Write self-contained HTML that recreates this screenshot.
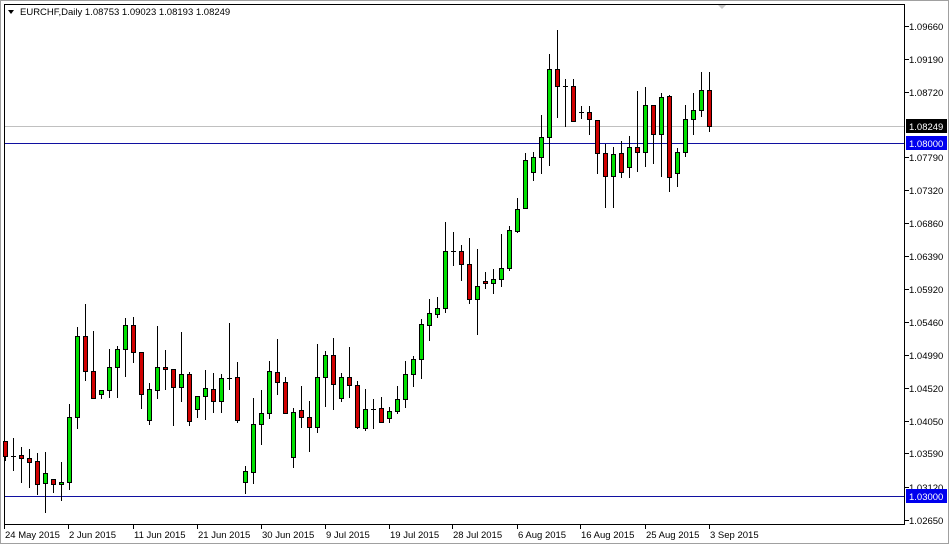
<!DOCTYPE html>
<html><head><meta charset="utf-8"><style>
html,body{margin:0;padding:0;background:#fff;}
body{width:949px;height:544px;overflow:hidden;}
svg{display:block;font-family:"Liberation Sans",sans-serif;}
</style></head><body>
<svg id="s" width="949" height="544" xmlns="http://www.w3.org/2000/svg">
<rect x="0" y="0" width="949" height="544" fill="#fff"/>
<rect x="0.5" y="0.5" width="948" height="543" fill="none" stroke="#a0a0a0"/>
<rect x="4.5" y="4.5" width="900" height="520" fill="#fff" stroke="#000"/>
<line x1="5" y1="126.5" x2="904" y2="126.5" stroke="#c0c0c0"/>
<line x1="5" y1="143.5" x2="904" y2="143.5" stroke="#1010a0"/>
<line x1="5" y1="496.5" x2="904" y2="496.5" stroke="#1010a0"/>
<polygon points="8,10 14,10 11,14" fill="#000"/>
<text x="20" y="15" font-size="9.5" fill="#000">EURCHF,Daily  1.08753 1.09023 1.08193 1.08249</text>
<polygon points="718,5 726,5 722,9" fill="#c8c8c8"/>
<g id="c"></g>
<g id="ax" font-size="9.5" fill="#000"></g>
</svg>
<script>
var d=[[5,441,456,441,460],[13,456,456,438,470],[21,455,458,447,482],[29,458,462,449,487],[37,461,484,453,494],[45,483,473,452,512],[53,479,484,479,492],[61,484,482,462,500],[69,482,417,404,489],[77,417,336,327,428],[85,336,371,304,380],[93,371,398,331,398],[101,394,390,390,398],[109,390,367,349,397],[117,367,349,346,397],[125,349,325,318,376],[133,325,352,317,362],[141,352,394,352,408],[149,420,389,383,424],[157,390,367,326,398],[165,367,369,350,389],[173,369,387,369,425],[181,387,374,332,401],[189,374,421,372,425],[197,409,396,396,417],[205,396,388,370,419],[213,389,401,373,412],[221,401,378,374,412],[229,378,378,323,389],[237,377,420,362,422],[245,482,471,466,493],[253,472,424,398,483],[261,424,413,390,444],[269,413,371,361,418],[277,372,382,339,394],[285,382,413,377,413],[293,457,412,408,467],[301,410,417,386,427],[309,417,427,401,451],[317,427,377,344,432],[325,377,355,351,406],[333,355,384,338,409],[341,398,377,373,401],[349,377,385,347,397],[357,385,427,381,428],[365,428,409,389,430],[373,409,409,399,428],[381,408,422,397,422],[389,418,411,407,422],[397,411,399,386,413],[405,399,374,361,407],[413,374,359,356,386],[421,359,324,319,378],[429,325,313,299,340],[437,314,308,297,317],[445,308,251,222,312],[453,251,251,232,265],[461,251,264,245,280],[469,264,299,238,303],[477,299,286,249,334],[485,281,283,272,288],[493,283,279,269,293],[501,279,268,234,286],[509,268,230,226,270],[517,231,209,198,232],[525,208,160,153,208],[533,172,157,152,180],[541,157,137,115,173],[549,137,69,54,165],[557,69,86,30,117],[565,86,86,79,126],[573,86,121,79,121],[581,112,112,106,118],[589,112,119,106,134],[597,120,153,120,173],[605,153,176,144,207],[613,176,154,147,207],[621,153,172,141,177],[629,167,147,136,177],[637,147,152,91,171],[645,152,105,87,166],[653,105,134,105,163],[661,134,97,93,176],[669,96,177,95,191],[677,173,152,148,186],[685,152,119,105,156],[693,119,110,93,134],[701,110,90,72,116],[709,90,126,72,131]];
var g=document.getElementById("c"),h="";
d.forEach(function(c){var x=c[0],o=c[1],cl=c[2],hi=c[3],lo=c[4];
h+='<line x1="'+(x+.5)+'" y1="'+hi+'" x2="'+(x+.5)+'" y2="'+(lo+1)+'" stroke="#000"/>';
if(o==cl){h+='<line x1="'+(x-2)+'" y1="'+(o+.5)+'" x2="'+(x+3)+'" y2="'+(o+.5)+'" stroke="#000"/>';}
else{var t=Math.min(o,cl),b=Math.max(o,cl),f=cl<o?"#00e000":"#d00000";
h+='<rect x="'+(x-1.5)+'" y="'+(t+.5)+'" width="4" height="'+(b-t)+'" fill="'+f+'" stroke="#000"/>';}});
g.innerHTML=h;
var a="",p=[["1.09660",26],["1.09190",59],["1.08720",92],["1.07790",157],["1.07320",190],["1.06860",223],["1.06390",256],["1.05920",289],["1.05460",322],["1.04990",355],["1.04520",388],["1.04050",421],["1.03590",453],["1.03120",487],["1.02650",520]];
p.forEach(function(q){a+='<line x1="905" y1="'+(q[1]+.5)+'" x2="909" y2="'+(q[1]+.5)+'" stroke="#000"/><text x="909" y="'+(q[1]+4)+'">'+q[0]+'</text>';});
a+='<rect x="906" y="119" width="41" height="14" fill="#000"/><text x="909" y="130" fill="#fff">1.08249</text>';
a+='<rect x="906" y="136" width="41" height="14" fill="#0000ee"/><text x="909" y="147" fill="#fff">1.08000</text>';
a+='<rect x="906" y="489" width="41" height="14" fill="#0000ee"/><text x="909" y="500" fill="#fff">1.03000</text>';
var dt=[["24 May 2015",4],["2 Jun 2015",68],["11 Jun 2015",133],["21 Jun 2015",197],["30 Jun 2015",261],["9 Jul 2015",325],["19 Jul 2015",389],["28 Jul 2015",452],["6 Aug 2015",517],["16 Aug 2015",580],["25 Aug 2015",645],["3 Sep 2015",709]];
dt.forEach(function(q){a+='<line x1="'+(q[1]+.5)+'" y1="525" x2="'+(q[1]+.5)+'" y2="529" stroke="#000"/><text x="'+(q[1]+1)+'" y="538">'+q[0]+'</text>';});
document.getElementById("ax").innerHTML=a;
</script>
</body></html>
